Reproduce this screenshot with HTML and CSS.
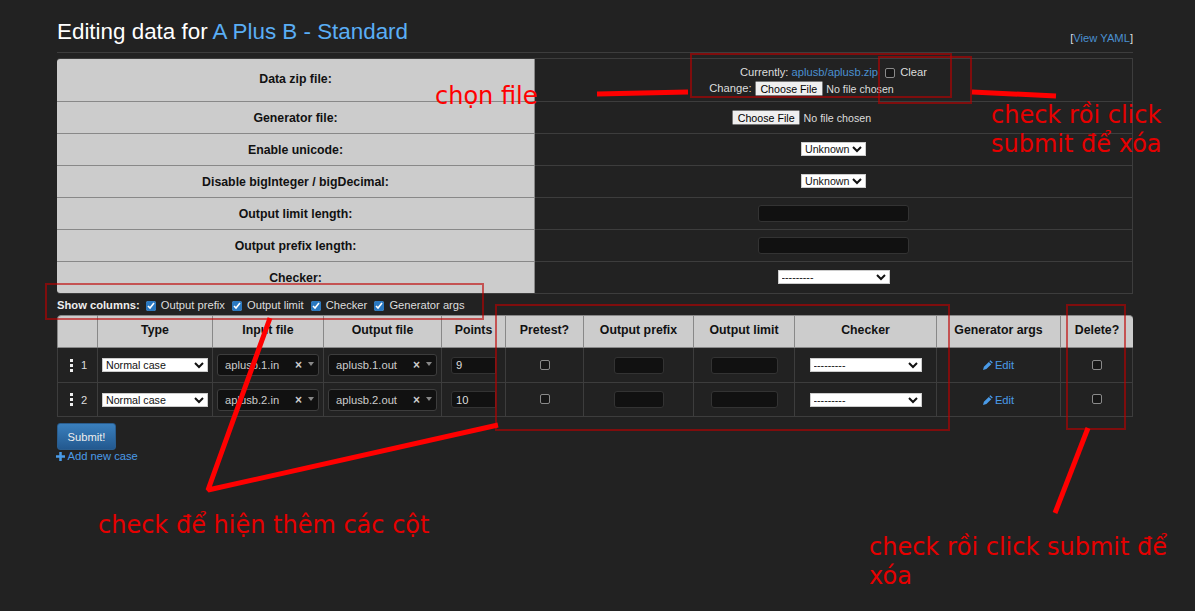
FILE: index.html
```html
<!DOCTYPE html>
<html lang="en">
<head>
  <meta charset="UTF-8">
  <meta name="viewport" content="width=device-width, initial-scale=1.0">
  <title>Editing data for A Plus B - Standard</title>
  <link rel="stylesheet" href="styles.css">
</head>
<body>

  <div class="page">
    <div class="title-row">
      <h1>Editing data for <a href="#">A Plus B - Standard</a></h1>
      <span class="yaml">[<a href="#">View YAML</a>]</span>
    </div>

    <table class="info">
      <tr class="row-zip">
        <th>Data zip file:</th>
        <td>
          <div class="current">Currently: <a href="#">aplusb/aplusb.zip</a> <input type="checkbox" class="clear-box"> <span>Clear</span></div>
          <div class="change">Change: <input type="file"></div>
        </td>
      </tr>
      <tr><th>Generator file:</th><td><input type="file"></td></tr>
      <tr><th>Enable unicode:</th><td><select class="tri"><option>Unknown</option></select></td></tr>
      <tr><th>Disable bigInteger / bigDecimal:</th><td><select class="tri"><option>Unknown</option></select></td></tr>
      <tr><th>Output limit length:</th><td><input type="text" class="dark wide"></td></tr>
      <tr><th>Output prefix length:</th><td><input type="text" class="dark wide"></td></tr>
      <tr><th>Checker:</th><td><select class="checker"><option>---------</option></select></td></tr>
    </table>

    <div class="columns">
      <b>Show columns:</b>
      <label><input type="checkbox" checked> Output prefix</label>
      <label><input type="checkbox" checked> Output limit</label>
      <label><input type="checkbox" checked> Checker</label>
      <label><input type="checkbox" checked> Generator args</label>
    </div>

    <table class="cases">
      <thead>
        <tr>
          <th class="c-num"></th>
          <th class="c-type">Type</th>
          <th class="c-in">Input file</th>
          <th class="c-out">Output file</th>
          <th class="c-pts">Points</th>
          <th class="c-pre">Pretest?</th>
          <th class="c-prefix">Output prefix</th>
          <th class="c-limit">Output limit</th>
          <th class="c-checker">Checker</th>
          <th class="c-args">Generator args</th>
          <th class="c-del">Delete?</th>
        </tr>
      </thead>
      <tbody>
        <tr class="case-one">
          <td><div class="num"><span class="handle"><i></i><i></i><i></i></span>1</div></td>
          <td><select class="type"><option>Normal case</option></select></td>
          <td><div class="pick"><span class="pick-name">aplusb.1.in</span><span class="pick-x">×</span><span class="pick-arrow"></span></div></td>
          <td><div class="pick"><span class="pick-name">aplusb.1.out</span><span class="pick-x">×</span><span class="pick-arrow"></span></div></td>
          <td><input type="text" class="dark points" value="9"></td>
          <td><input type="checkbox"></td>
          <td><input type="text" class="dark short"></td>
          <td><input type="text" class="dark mid"></td>
          <td><select class="checker"><option>---------</option></select></td>
          <td><a href="#" class="edit"><svg viewBox="0 0 10 10" width="10" height="10"><path d="M7.3 .2l2.5 2.2-.9 1.1-2.5-2.2zM5.8 2l2.5 2.2-4.9 4.9L0 10l.9-3.2z" fill="currentColor"/></svg> Edit</a></td>
          <td><input type="checkbox"></td>
        </tr>
        <tr class="case-two">
          <td><div class="num"><span class="handle"><i></i><i></i><i></i></span>2</div></td>
          <td><select class="type"><option>Normal case</option></select></td>
          <td><div class="pick"><span class="pick-name">aplusb.2.in</span><span class="pick-x">×</span><span class="pick-arrow"></span></div></td>
          <td><div class="pick"><span class="pick-name">aplusb.2.out</span><span class="pick-x">×</span><span class="pick-arrow"></span></div></td>
          <td><input type="text" class="dark points" value="10"></td>
          <td><input type="checkbox"></td>
          <td><input type="text" class="dark short"></td>
          <td><input type="text" class="dark mid"></td>
          <td><select class="checker"><option>---------</option></select></td>
          <td><a href="#" class="edit"><svg viewBox="0 0 10 10" width="10" height="10"><path d="M7.3 .2l2.5 2.2-.9 1.1-2.5-2.2zM5.8 2l2.5 2.2-4.9 4.9L0 10l.9-3.2z" fill="currentColor"/></svg> Edit</a></td>
          <td><input type="checkbox"></td>
        </tr>
      </tbody>
    </table>

    <button type="button" class="submit">Submit!</button>
    <a href="#" class="add"><svg viewBox="0 0 10 10" width="9" height="9"><path d="M3.6 0h2.8v3.6H10v2.8H6.4V10H3.6V6.4H0V3.6h3.6z" fill="currentColor"/></svg> Add new case</a>
  </div>

  <!-- red notes drawn on top of the screenshot -->
  <svg class="marks" width="1195" height="611" viewBox="0 0 1195 611">
    <g class="boxes">
      <rect x="691" y="54" width="260" height="43"/>
      <rect x="879" y="57" width="92" height="46"/>
      <rect x="46" y="284" width="437" height="35"/>
      <rect x="496" y="305" width="453" height="125"/>
      <rect x="1067" y="305" width="58" height="124"/>
    </g>
    <g class="lines">
      <path d="M597 94L688 92"/>
      <path d="M972 92L1056 96"/>
      <path d="M270 318L208 490L498 425"/>
      <path d="M1088 428L1055 513"/>
    </g>
  </svg>
  <div class="note note-file">chọn file</div>
  <div class="note note-clear">check rồi click<br>submit để xóa</div>
  <div class="note note-cols">check để hiện thêm các cột</div>
  <div class="note note-del">check rồi click submit để<br>xóa</div>

</body>
</html>
```

FILE: styles.css
```css
html, body {
  height: 611px;
  overflow: hidden;
}

body {
  margin: 0;
  background-color: #222;
  color: #ddd;
  font-family: "Liberation Sans", Arial, sans-serif;
  font-size: 11.2px;
  position: relative;
}

a {
  color: #5aaef5;
  text-decoration: none;
}

.page {
  width: 1076px;
  margin-left: 57px;
}

.title-row {
  display: flex;
  justify-content: space-between;
  align-items: flex-end;
  height: 52px;
  border-bottom: 1px solid #3d3d3d;
  margin-bottom: 5px;
}

h1 {
  margin: 0 0 7px;
  font-size: 22.4px;
  font-weight: 400;
  line-height: 27px;
  color: #fff;
}

.yaml {
  margin-bottom: 8px;
  color: #ddd;
}

.yaml a {
  color: #4a90d0;
}

table {
  border-collapse: separate;
  border-spacing: 0;
  width: 1076px;
  table-layout: fixed;
}

th, td {
  box-sizing: border-box;
  padding: 0;
}

.info {
  border: 1px solid #3d3d3d;
  border-left: 0;
  border-radius: 3px 0 0 3px;
}

.info th {
  width: 478px;
  height: 32px;
  background-color: #ccc;
  color: #111;
  font-size: 12.32px;
  border-bottom: 1px solid #888;
  border-right: 1px solid #888;
}

.info tr:first-child th {
  border-top-left-radius: 3px;
  padding-bottom: 3px;
}

.info tr:last-child th {
  height: 31px;
  border-bottom-left-radius: 3px;
  border-bottom: 0;
}

.info td {
  text-align: center;
  border-bottom: 1px solid #3d3d3d;
}

.info tr:last-child td {
  border-bottom: 0;
}

.info .row-zip th,
.row-zip td {
  height: 43px;
}

.info select {
  margin-bottom: 2px;
}

.current {
  line-height: 16px;
}

.current a {
  color: #4a90d0;
}

.current .clear-box {
  margin: 0 2px 0 4px;
}

.change {
  line-height: 17px;
  height: 17px;
}

/* the page in the picture was taken at 80% browser zoom, native controls follow that */
input[type="file"],
select {
  zoom: 0.8;
  font-family: "Liberation Sans", Arial, sans-serif;
  font-size: 13.33px;
}

input[type="file"] {
  width: 254px;
  color: #ddd;
  text-align: left;
  vertical-align: middle;
}

input[type="checkbox"] {
  width: 10px;
  height: 10px;
  margin: 0;
  accent-color: #2a78c0;
  vertical-align: middle;
}

input[type="checkbox"]:not(:checked) {
  appearance: none;
  box-sizing: border-box;
  background-color: #161616;
  border: 1px solid #8a8a8a;
  border-radius: 2px;
}

.cases input[type="checkbox"] {
  display: block;
  margin: 0 auto 1px;
}

select {
  height: 17.5px;
  border: 1px solid #ccc;
  border-radius: 0;
  background-color: #fff;
  color: #111;
}

.tri {
  width: 81.25px;
}

.type {
  width: 132.5px;
}

.checker {
  width: 140px;
}

.dark {
  box-sizing: border-box;
  background-color: #111;
  border: 1px solid #333;
  border-radius: 3px;
  color: #ddd;
  font-family: "Liberation Sans", Arial, sans-serif;
  font-size: 11.2px;
  padding: 0 4px;
  height: 17px;
  vertical-align: middle;
}

.wide {
  width: 151px;
}

.columns {
  display: flex;
  align-items: center;
  height: 21px;
  color: #ddd;
}

.columns b {
  color: #eee;
  margin-right: 6px;
}

.columns label {
  margin-right: 7px;
  padding-top: 1px;
}

.columns input {
  margin-right: 2px;
}

.cases th {
  height: 33px;
  padding-bottom: 3px;
  background-color: #ccc;
  color: #111;
  font-size: 12.32px;
  border-bottom: 1px solid #888;
  border-right: 1px solid #888;
  border-top: 1px solid #888;
}

.cases th:first-child {
  border-top-left-radius: 4px;
  border-left: 1px solid #888;
}

.cases th:last-child {
  border-top-right-radius: 4px;
  border-right: 0;
}

.cases td {
  text-align: center;
  border-bottom: 1px solid #3d3d3d;
  border-right: 1px solid #3d3d3d;
}

.cases td:first-child {
  border-left: 1px solid #3d3d3d;
}

.case-one td {
  height: 35px;
}

.case-two td {
  height: 34px;
}

.c-num { width: 41px; }
.c-type { width: 115px; }
.c-in { width: 111px; }
.c-out { width: 118px; }
.c-pts { width: 64px; }
.c-pre { width: 78px; }
.c-prefix { width: 110px; }
.c-limit { width: 101px; }
.c-checker { width: 142px; }
.c-args { width: 124px; }

.num {
  display: flex;
  align-items: center;
  justify-content: center;
  gap: 8px;
  padding-left: 2px;
}

.handle {
  display: flex;
  flex-direction: column;
  gap: 2px;
}

.handle i {
  display: block;
  width: 3px;
  height: 3px;
  background-color: #eee;
}

.pick {
  display: flex;
  align-items: center;
  box-sizing: border-box;
  height: 22px;
  margin: 0 4px;
  padding: 1px 4px 1px 7px;
  background-color: #111;
  border: 1px solid #3d3d3d;
  border-radius: 3px;
  color: #ccc;
  text-align: left;
}

.pick-name {
  flex: 1;
}

.pick-x {
  font-weight: 700;
  margin-right: 6px;
  color: #ccc;
  font-size: 12px;
}

.pick-arrow {
  width: 0;
  height: 0;
  border-left: 3px solid transparent;
  border-right: 3px solid transparent;
  border-top: 4px solid #888;
  margin-top: -2px;
}

.points {
  display: block;
  width: 45px;
  margin-left: 9px;
  border-top-right-radius: 0;
  border-bottom-right-radius: 0;
}

.short {
  width: 50px;
}

.mid {
  width: 67px;
}

.edit {
  color: #4a9be8;
}

.edit svg {
  vertical-align: -1px;
  margin-right: -1px;
}

.submit {
  display: block;
  width: 59px;
  height: 27px;
  margin-top: 6px;
  padding: 0;
  border: 1px solid #2a5d8e;
  border-radius: 3px;
  background: linear-gradient(#3a7fbd, #23598f);
  color: #eee;
  font-family: "Liberation Sans", Arial, sans-serif;
  font-size: 11.2px;
}

.add {
  display: block;
  margin-left: -1px;
  line-height: 13px;
  color: #4a9be8;
}

.add svg {
  vertical-align: -1px;
}

.marks {
  position: absolute;
  left: 0;
  top: 0;
}

.boxes rect {
  fill: none;
  stroke: rgba(190, 0, 0, 0.6);
  stroke-width: 2;
}

.lines path {
  fill: none;
  stroke: #f00;
  stroke-width: 5;
  stroke-linejoin: bevel;
}

.note {
  position: absolute;
  color: #e60000;
  font-family: "DejaVu Sans", sans-serif;
  font-size: 24px;
  line-height: 29px;
  white-space: nowrap;
}

.note-file { left: 435px; top: 82px; color: #f00; }
.note-clear { left: 991px; top: 101px; }
.note-cols { left: 98px; top: 511px; }
.note-del { left: 869px; top: 533px; }
```
